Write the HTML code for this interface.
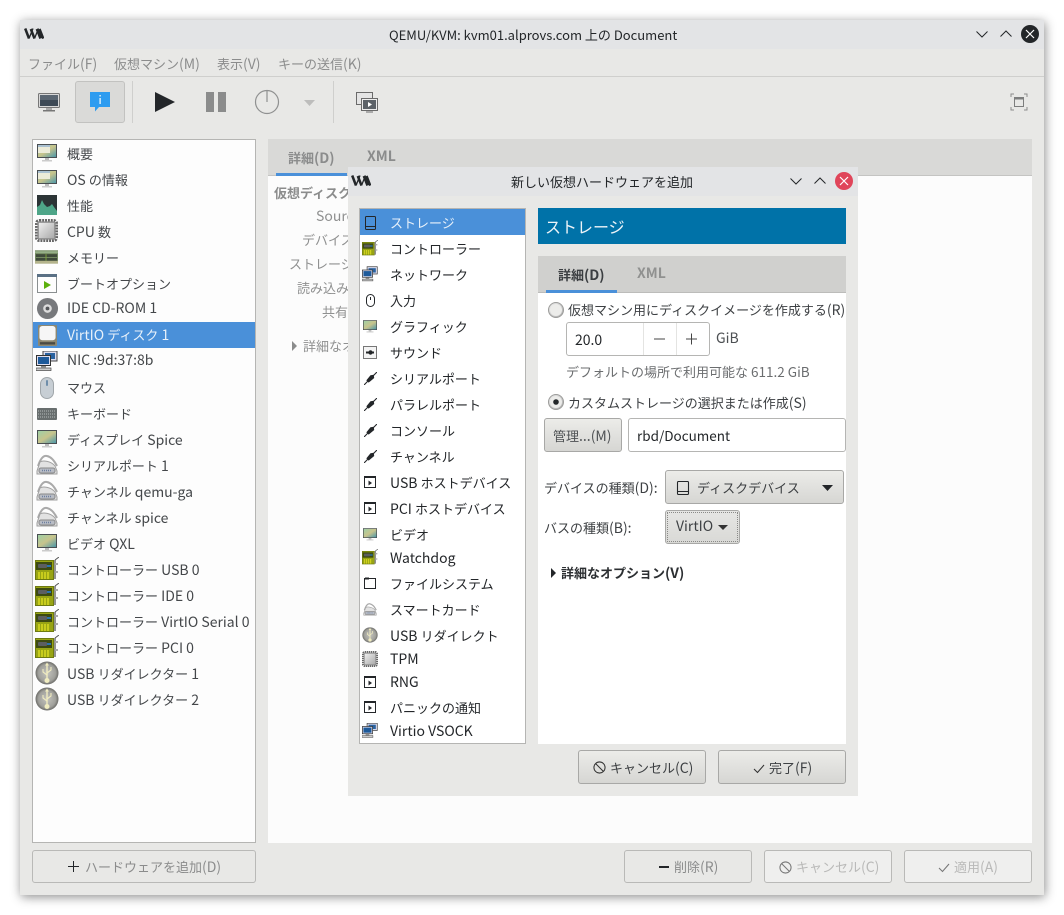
<!DOCTYPE html>
<html lang="ja"><head><meta charset="utf-8"><title>QEMU/KVM</title>
<style>
html,body{margin:0;padding:0;background:#fff;width:1064px;height:915px;overflow:hidden}
body{position:relative;font-family:"Noto Sans CJK JP","Liberation Sans",sans-serif;font-size:14px;color:#232629}
.a{position:absolute;box-sizing:border-box}
.t{position:absolute;white-space:nowrap;line-height:20px;height:20px}
i{font-style:normal;font-size:13px}
svg{position:absolute;overflow:visible}
.m{color:#8b8c8c}
.l{color:#44474a}
.lb{color:#8f9090;text-align:right}
.b{font-weight:700}
.btn{position:absolute;box-sizing:border-box;border:1px solid #b9b9b7;border-radius:3px}
.grad{background:linear-gradient(#ecece9,#d6d6d3);border-color:#a8a8a6}
.d{color:#232629}
</style></head><body>
<svg width="0" height="0" style="position:absolute">
<defs>
<linearGradient id="scr" x1="0" y1="0" x2="1" y2="1"><stop offset="0" stop-color="#9ed0a6"/><stop offset=".5" stop-color="#c8c48c"/><stop offset="1" stop-color="#4d98a8"/></linearGradient>
<linearGradient id="gry" x1="0" y1="0" x2="1" y2="1"><stop offset="0" stop-color="#eee"/><stop offset="1" stop-color="#aaa"/></linearGradient>
<radialGradient id="usbg"><stop offset="0" stop-color="#c4c4be"/><stop offset=".75" stop-color="#a0a09b"/><stop offset="1" stop-color="#6c6c68"/></radialGradient>
<symbol id="logo" viewBox="0 0 20 11"><path d="M1.200 .5L5 10.500M6.800 1l3.700 9.500M12.800 1l3.700 9.500M15.500 1l3.700 9.500" fill="none" stroke="#232629" stroke-width="2.500"/><path d="M5 10.500L9 .5M10.500 10.500L14.500 .5" fill="none" stroke="#232629" stroke-width="1.300"/></symbol>
<symbol id="mon" viewBox="0 0 20 18"><rect x="0" y="0" width="20" height="14" fill="#4a4f52"/><rect x="1" y="1" width="18" height="12" fill="url(#scr)"/><rect x="8" y="14" width="4" height="2" fill="#bbb"/><rect x="5" y="16" width="10" height="1.500" fill="#ccc"/></symbol>
<symbol id="monw" viewBox="0 0 20 18"><rect x="0" y="0" width="20" height="14" fill="#4a4f52"/><rect x="1" y="1" width="18" height="12" fill="url(#scr)"/><rect x="1" y="1" width="12" height="8" fill="#ecebd8"/><rect x="1" y="1" width="12" height="2" fill="#aac0d0"/><rect x="8" y="14" width="4" height="2" fill="#bbb"/><rect x="5" y="16" width="10" height="1.500" fill="#ccc"/></symbol>
<symbol id="perf" viewBox="0 0 20 20"><rect width="20" height="20" fill="#2c3436"/><path d="M0 20V12l3-2 2-5 2 4 3 3 3-1 2-2 2 3 3 4v4z" fill="#4ea588"/></symbol>
<symbol id="cpu" viewBox="0 0 24 24"><rect x="1.500" y="1.500" width="21" height="21" rx="3" fill="none" stroke="#666" stroke-width="3" stroke-dasharray="2 1"/><rect x="2.500" y="2.500" width="19" height="19" rx="2" fill="#8d8d8d"/><rect x="4" y="4" width="16" height="16" fill="url(#gry)"/></symbol>
<symbol id="mem" viewBox="0 0 24 14"><rect width="24" height="13" fill="#748a62"/><rect x="1" y="4" width="22" height="3" fill="#3f4a3a"/><rect x="1" y="8" width="22" height="3" fill="#3f4a3a"/><rect x="0" y="1" width="24" height="2" fill="#96b088"/><rect x="11" y="4" width="1" height="7" fill="#7ca03a"/><rect y="11" width="24" height="3" fill="#b4b48c"/></symbol>
<symbol id="boot" viewBox="0 0 20 19"><rect x=".5" y=".5" width="19" height="18" fill="#fdfdfd" stroke="#8a8f90"/><rect width="20" height="3" fill="#5a7084"/><path d="M7 7l7 4-7 4z" fill="#5cb00c"/></symbol>
<symbol id="cd" viewBox="0 0 24 24"><circle cx="12" cy="12" r="11" fill="#77797c"/><circle cx="12" cy="12" r="4.500" fill="#dcdcdc"/><circle cx="12" cy="12" r="2" fill="#55575a"/></symbol>
<symbol id="disk" viewBox="0 0 20 22"><rect width="20" height="22" rx="1" fill="#8d8872"/><rect x="1.500" y="1" width="17" height="15" rx="3" fill="#f6f6f6"/><rect x="2" y="18" width="16" height="2.500" fill="#4a4a44"/></symbol>
<symbol id="nic" viewBox="0 0 22 20"><rect x="7" y="0" width="14" height="10" fill="#dde" stroke="#444" stroke-width="1"/><rect x="9" y="2" width="10" height="6" fill="#2a62a0"/><rect x=".5" y="4.500" width="14" height="10" fill="#dde" stroke="#333" stroke-width="1"/><rect x="2" y="6" width="11" height="7" fill="#1e5a9a"/><rect x="0" y="17" width="15" height="2.500" fill="#ccc" stroke="#444" stroke-width=".7"/><rect x="5" y="15" width="5" height="2" fill="#888"/></symbol>
<symbol id="mouse" viewBox="0 0 14 22"><rect x=".5" y=".5" width="13" height="21" rx="6.500" fill="#c7ced4" stroke="#a0a6aa"/><rect x="6" y="3" width="2" height="6" rx="1" fill="#6f8eaa"/></symbol>
<symbol id="kbd" viewBox="0 0 20 12"><rect width="20" height="12" rx="1" fill="#686e6e"/><path d="M1 3h18M1 6h18M1 9h18" stroke="#b4baba" stroke-width="1" stroke-dasharray="1 1"/></symbol>
<symbol id="ser" viewBox="0 0 24 24"><path d="M3 13C5 7 8 2 12 3c5 1 8 6 10 10" fill="none" stroke="#aaa" stroke-width="2"/><path d="M5 9C8 7 16 8 20 13l2 5v3H2v-3z" fill="#e2e2e2" stroke="#a0a0a0"/><rect x="4" y="15" width="16" height="5" rx="2" fill="#b8bcc4" stroke="#888"/><path d="M7 17.500h10" stroke="#6d7fa0" stroke-width="1.500" stroke-dasharray="1 1"/></symbol>
<symbol id="ctl" viewBox="0 0 24 24"><rect y="3" width="19" height="20" fill="#6e7a10"/><rect x="1" y="4" width="17" height="18" fill="#98a414"/><rect x="1" y="5" width="16" height="8" fill="#3d4a12"/><rect x="3" y="7" width="9" height="4" rx="1" fill="#5c5e60"/><rect x="12" y="8" width="4" height="2" fill="#2a72b0"/><path d="M4 15v7M7 15v7M10 15v7M13 15v7" stroke="#d8da20" stroke-width="1.500"/><path d="M20 3v19" stroke="#888" stroke-width="1.800" fill="none"/><path d="M20 7h3M20 15h3" stroke="#aaa" stroke-width="2"/><path d="M20 3l4-3" stroke="#555" stroke-width="1"/></symbol>
<symbol id="usb" viewBox="0 0 24 24"><circle cx="12" cy="12" r="11.500" fill="url(#usbg)"/><path d="M12 1.500l2 3h-1.300v13h-1.400v-13H10z" fill="#f0ecc0"/><path d="M12 14l-4-3V8M12 12l4-3V6" stroke="#f0ecc0" stroke-width="1.100" fill="none"/><circle cx="12" cy="19.500" r="2.500" fill="#f0ecc0"/></symbol>
<symbol id="hdd" viewBox="0 0 14 14"><rect x="1.500" y=".5" width="11" height="13" rx="1" fill="none" stroke="#232629" stroke-width="1.100"/><path d="M2 10.500h10" stroke="#232629"/></symbol>
<symbol id="plug" viewBox="0 0 14 14"><path d="M0 14l4-4M14 0l-4 4" stroke="#232629" stroke-width="1.200"/><path d="M2.500 9L7 3.500l3.500-.5.500 3.500L5 11.500z" fill="#232629"/></symbol>
<symbol id="app" viewBox="0 0 12 12"><rect x=".5" y=".5" width="11" height="11" fill="#fff" stroke="#232629"/><rect width="12" height="2" fill="#232629"/><path d="M4.500 4.500l3.500 2.500-3.500 2.500z" fill="#232629"/></symbol>
<symbol id="ban" viewBox="0 0 14 14"><circle cx="7" cy="7" r="6" fill="none" stroke="currentColor" stroke-width="1.100"/><path d="M3 3l8 8" stroke="currentColor" stroke-width="1.100"/></symbol>
<symbol id="chk" viewBox="0 0 12 10"><path d="M1 5l3.500 3.500L11 1" fill="none" stroke="currentColor" stroke-width="1.100"/></symbol>
</defs></svg>

<!-- main window -->
<div class="a" style="left:20px;top:20px;width:1024px;height:875px;background:#e8e8e6;box-shadow:1px 2px 10px rgba(0,0,0,.45)"></div>
<div class="a" style="left:20px;top:20px;width:1024px;height:29px;background:#e3e4e6"></div>
<svg style="left:24px;top:28px" width="20" height="11"><use href="#logo"/></svg>
<div class="t" style="left:389px;top:25px;font-size:13px">QEMU/KVM: kvm01.alprovs.com 上の Document</div>
<svg style="left:976px;top:31px" width="12" height="7"><path d="M.5 .5L6 6l5.500-5.500" fill="none" stroke="#232629" stroke-width="1"/></svg>
<svg style="left:1000px;top:30px" width="12" height="7"><path d="M.5 6.500L6 1l5.500 5.500" fill="none" stroke="#232629" stroke-width="1"/></svg>
<svg style="left:1021px;top:25px" width="18" height="18"><circle cx="9" cy="9" r="9" fill="#232629"/><path d="M5 5l8 8M13 5l-8 8" stroke="#fff" stroke-width="1.200"/></svg>

<div class="t m" style="left:28px;top:54px"><i>ファイル</i>(F)</div>
<div class="t m" style="left:114px;top:54px"><i>仮想マシン</i>(M)</div>
<div class="t m" style="left:217px;top:54px"><i>表示</i>(V)</div>
<div class="t m" style="left:278px;top:54px"><i>キーの送信</i>(K)</div>
<div class="a" style="left:20px;top:76px;width:1024px;height:1px;background:#cfcfcd"></div>

<!-- toolbar -->
<svg style="left:38px;top:93px" width="22" height="19"><rect x=".5" y=".5" width="21" height="14" rx="1" fill="#d8d8d8" stroke="#777"/><rect x="2" y="2" width="18" height="11" fill="#3e4a56"/><rect x="2" y="2" width="18" height="5" fill="#5a6672"/><rect x="8" y="15" width="6" height="2" fill="#aaa"/><rect x="5" y="17" width="12" height="1.500" fill="#777"/></svg>
<div class="a" style="left:75px;top:81px;width:50px;height:42px;background:#dadad8;border:1px solid #c2c2c0;border-radius:3px"></div>
<svg style="left:90px;top:92px" width="20" height="20"><path d="M0 0h20v15H9l-4 4.500V15H0z" fill="#2e9cf0"/><rect x="9.500" y="3" width="1.200" height="1.500" fill="#fff"/><rect x="9.500" y="6" width="1.200" height="6" fill="#fff"/></svg>
<div class="a" style="left:132px;top:81px;width:1px;height:42px;background:#cfcfcd"></div>
<svg style="left:155px;top:92px" width="20" height="20"><path d="M0 0l20 10L0 20z" fill="#232629"/></svg>
<div class="a" style="left:206px;top:92px;width:8px;height:20px;background:#8b8c8c"></div>
<div class="a" style="left:218px;top:92px;width:8px;height:20px;background:#8b8c8c"></div>
<svg style="left:254px;top:89px" width="26" height="26"><circle cx="13" cy="13" r="11.500" fill="none" stroke="#8f9090" stroke-width="1.200"/><path d="M13 1v12" stroke="#8f9090" stroke-width="1.200"/></svg>
<svg style="left:304px;top:100px" width="11" height="6"><path d="M0 0h11L5.500 6z" fill="#bdbdbc"/></svg>
<div class="a" style="left:333px;top:81px;width:1px;height:42px;background:#cfcfcd"></div>
<svg style="left:356px;top:92px" width="22" height="22"><rect x=".5" y=".5" width="16" height="12" fill="#e4e4e4" stroke="#6a6a6a"/><rect x="5.500" y="6.500" width="16" height="12" fill="#eee" stroke="#6a6a6a"/><rect x="7" y="8" width="13" height="9" fill="#5c6268"/><path d="M12 10l4 2.500-4 2.500z" fill="#fff"/><rect x="10" y="19" width="7" height="2" fill="#aaa"/></svg>
<svg style="left:1011px;top:94px" width="16" height="16"><path d="M0 3V0h3M13 0h3v3M16 13v3h-3M3 16H0v-3" fill="none" stroke="#8b8c8c" stroke-width="1"/><rect x="3.500" y="3.500" width="9" height="9" fill="none" stroke="#7d7e7e"/><rect x="3" y="3" width="10" height="2.500" fill="#7d7e7e"/></svg>

<!-- left list -->
<div class="a" style="left:32px;top:139px;width:224px;height:704px;background:#fdfdfd;border:1px solid #b5b5b3"></div>
<div class="a" style="left:33px;top:322px;width:222px;height:26px;background:#4a90d9"></div>
<svg style="left:37px;top:144px" width="20" height="18"><use href="#monw"/></svg><div class="t l" style="left:67px;top:144px"><i>概要</i></div>
<svg style="left:37px;top:170px" width="20" height="18"><use href="#monw"/></svg><div class="t l" style="left:67px;top:170px">OS <i>の情報</i></div>
<svg style="left:37px;top:195px" width="20" height="20"><use href="#perf"/></svg><div class="t l" style="left:67px;top:196px"><i>性能</i></div>
<svg style="left:35px;top:219px" width="23" height="23"><use href="#cpu"/></svg><div class="t l" style="left:67px;top:222px">CPU <i>数</i></div>
<svg style="left:35px;top:250px" width="23" height="14"><use href="#mem"/></svg><div class="t l" style="left:67px;top:248px"><i>メモリー</i></div>
<svg style="left:37px;top:274px" width="20" height="19"><use href="#boot"/></svg><div class="t l" style="left:67px;top:274px"><i>ブートオプション</i></div>
<svg style="left:36px;top:297px" width="23" height="23"><use href="#cd"/></svg><div class="t l" style="left:67px;top:298px">IDE CD-ROM 1</div>
<svg style="left:38px;top:325px" width="19" height="21"><use href="#disk"/></svg><div class="t" style="left:67px;top:325px;color:#e8f1fa">VirtIO <i>ディスク</i> 1</div>
<svg style="left:36px;top:351px" width="22" height="20"><use href="#nic"/></svg><div class="t l" style="left:67px;top:350px">NIC :9d:37:8b</div>
<svg style="left:40px;top:377px" width="14" height="22"><use href="#mouse"/></svg><div class="t l" style="left:67px;top:378px"><i>マウス</i></div>
<svg style="left:37px;top:408px" width="20" height="12"><use href="#kbd"/></svg><div class="t l" style="left:67px;top:404px"><i>キーボード</i></div>
<svg style="left:37px;top:430px" width="20" height="18"><use href="#mon"/></svg><div class="t l" style="left:67px;top:430px"><i>ディスプレイ</i> Spice</div>
<svg style="left:35px;top:453px" width="24" height="24"><use href="#ser"/></svg><div class="t l" style="left:67px;top:456px"><i>シリアルポート</i> 1</div>
<svg style="left:35px;top:479px" width="24" height="24"><use href="#ser"/></svg><div class="t l" style="left:67px;top:482px"><i>チャンネル</i> qemu-ga</div>
<svg style="left:35px;top:505px" width="24" height="24"><use href="#ser"/></svg><div class="t l" style="left:67px;top:508px"><i>チャンネル</i> spice</div>
<svg style="left:37px;top:534px" width="20" height="18"><use href="#mon"/></svg><div class="t l" style="left:67px;top:534px"><i>ビデオ</i> QXL</div>
<svg style="left:35px;top:557px" width="24" height="24"><use href="#ctl"/></svg><div class="t l" style="left:67px;top:560px"><i>コントローラー</i> USB 0</div>
<svg style="left:35px;top:583px" width="24" height="24"><use href="#ctl"/></svg><div class="t l" style="left:67px;top:586px"><i>コントローラー</i> IDE 0</div>
<svg style="left:35px;top:609px" width="24" height="24"><use href="#ctl"/></svg><div class="t l" style="left:67px;top:612px"><i>コントローラー</i> VirtIO Serial 0</div>
<svg style="left:35px;top:635px" width="24" height="24"><use href="#ctl"/></svg><div class="t l" style="left:67px;top:638px"><i>コントローラー</i> PCI 0</div>
<svg style="left:35px;top:661px" width="24" height="24"><use href="#usb"/></svg><div class="t l" style="left:67px;top:664px">USB <i>リダイレクター</i> 1</div>
<svg style="left:35px;top:687px" width="24" height="24"><use href="#usb"/></svg><div class="t l" style="left:67px;top:690px">USB <i>リダイレクター</i> 2</div>

<!-- right pane behind -->
<div class="a" style="left:268px;top:139px;width:764px;height:37px;background:#d9d9d7;border-bottom:1px solid #c4c4c2"></div>
<div class="a" style="left:276px;top:173px;width:71px;height:3px;background:#4a90d9"></div>
<div class="a" style="left:268px;top:176px;width:764px;height:667px;background:#fcfcfc"></div>
<div class="t b m" style="left:288px;top:148px"><i>詳細</i>(D)</div>
<div class="t b m" style="left:367px;top:146px">XML</div>
<div class="t b m" style="left:274px;top:183px"><i>仮想ディスク</i></div>
<div class="t lb" style="left:316px;top:206px">Source</div>
<div class="t lb" style="left:302px;top:230px"><i>デバイス</i></div>
<div class="t lb" style="left:289px;top:254px"><i>ストレージ</i></div>
<div class="t lb" style="left:297px;top:278px"><i>読み込み</i></div>
<div class="t lb" style="left:322px;top:302px"><i>共有</i></div>
<svg style="left:292px;top:341px" width="6" height="10"><path d="M0 0l5 5-5 5z" fill="#8b8c8c"/></svg>
<div class="t lb" style="left:303px;top:336px"><i>詳細なオ</i></div>

<!-- bottom buttons -->
<div class="btn" style="left:32px;top:850px;width:224px;height:33px"></div>
<svg style="left:68px;top:861px" width="11" height="11"><path d="M5.500 0v11M0 5.500h11" stroke="#232629" stroke-width="1"/></svg>
<div class="t" style="left:85px;top:857px;color:#8b8c8c"><i>ハードウェアを追加</i>(D)</div>
<div class="btn" style="left:624px;top:850px;width:128px;height:33px"></div>
<div class="a" style="left:659px;top:866px;width:10px;height:2px;background:#232629"></div>
<div class="t" style="left:674px;top:857px;color:#8b8c8c"><i>削除</i>(R)</div>
<div class="btn" style="left:764px;top:850px;width:128px;height:33px;background:#efefee"></div>
<svg style="left:779px;top:861px;color:#777" width="13" height="13"><use href="#ban"/></svg>
<div class="t" style="left:796px;top:857px;color:#b9b9b8"><i>キャンセル</i>(C)</div>
<div class="btn" style="left:904px;top:850px;width:128px;height:33px;background:#efefee"></div>
<svg style="left:938px;top:863px;color:#777" width="12" height="10"><use href="#chk"/></svg>
<div class="t" style="left:954px;top:857px;color:#b9b9b8"><i>適用</i>(A)</div>

<!-- dialog -->
<div class="a" style="left:348px;top:167px;width:510px;height:629px;background:#e8e8e6"></div>
<div class="a" style="left:348px;top:167px;width:510px;height:29px;background:#e3e4e6"></div>
<svg style="left:351px;top:175px" width="20" height="11"><use href="#logo"/></svg>
<div class="t" style="left:511px;top:172px"><i>新しい仮想ハードウェアを追加</i></div>
<svg style="left:790px;top:178px" width="12" height="7"><path d="M.5 .5L6 6l5.500-5.500" fill="none" stroke="#232629" stroke-width="1"/></svg>
<svg style="left:814px;top:177px" width="12" height="7"><path d="M.5 6.500L6 1l5.500 5.500" fill="none" stroke="#232629" stroke-width="1"/></svg>
<svg style="left:835px;top:172px" width="18" height="18"><circle cx="9" cy="9" r="9" fill="#e0455a"/><path d="M5 5l8 8M13 5l-8 8" stroke="#fff" stroke-width="1.200"/></svg>

<div class="a" style="left:359px;top:208px;width:167px;height:536px;background:#fff;border:1px solid #b5b5b3"></div>
<div class="a" style="left:360px;top:209px;width:165px;height:26px;background:#4a90d9"></div>
<svg style="left:364px;top:216px" width="14" height="14"><rect x="1.500" y=".5" width="10" height="13" rx="1" fill="none" stroke="#232629"/><path d="M2 10.500h9" stroke="#232629"/></svg><div class="t" style="left:390px;top:213px;color:#e8f1fa"><i>ストレージ</i></div>
<svg style="left:362px;top:240px" width="16" height="16"><use href="#ctl"/></svg><div class="t d" style="left:390px;top:239px"><i>コントローラー</i></div>
<svg style="left:362px;top:266px" width="16" height="16"><use href="#nic"/></svg><div class="t d" style="left:390px;top:265px"><i>ネットワーク</i></div>
<svg style="left:366px;top:294px" width="9" height="14"><rect x=".5" y=".5" width="8" height="12" rx="4" fill="none" stroke="#232629"/><path d="M4.500 3v3" stroke="#232629"/></svg><div class="t d" style="left:390px;top:291px"><i>入力</i></div>
<svg style="left:363px;top:320px" width="14" height="13"><use href="#mon"/></svg><div class="t d" style="left:390px;top:317px"><i>グラフィック</i></div>
<svg style="left:363px;top:346px" width="14" height="13"><rect x=".5" y=".5" width="13" height="12" fill="#f4f4f4" stroke="#777"/><path d="M3 6.500h3M8 6.500h3" stroke="#232629" stroke-width="2"/><circle cx="7.500" cy="6.500" r="2.200" fill="#232629"/></svg><div class="t d" style="left:390px;top:343px"><i>サウンド</i></div>
<svg style="left:364px;top:372px" width="13" height="13"><use href="#plug"/></svg><div class="t d" style="left:390px;top:369px"><i>シリアルポート</i></div>
<svg style="left:364px;top:398px" width="13" height="13"><use href="#plug"/></svg><div class="t d" style="left:390px;top:395px"><i>パラレルポート</i></div>
<svg style="left:364px;top:424px" width="13" height="13"><use href="#plug"/></svg><div class="t d" style="left:390px;top:421px"><i>コンソール</i></div>
<svg style="left:364px;top:450px" width="13" height="13"><use href="#plug"/></svg><div class="t d" style="left:390px;top:447px"><i>チャンネル</i></div>
<svg style="left:364px;top:476px" width="12" height="12"><use href="#app"/></svg><div class="t d" style="left:390px;top:473px">USB <i>ホストデバイス</i></div>
<svg style="left:364px;top:502px" width="12" height="12"><use href="#app"/></svg><div class="t d" style="left:390px;top:499px">PCI <i>ホストデバイス</i></div>
<svg style="left:363px;top:528px" width="14" height="13"><use href="#mon"/></svg><div class="t d" style="left:390px;top:525px"><i>ビデオ</i></div>
<svg style="left:362px;top:549px" width="16" height="16"><use href="#ctl"/></svg><div class="t d" style="left:390px;top:548px">Watchdog</div>
<svg style="left:364px;top:577px" width="12" height="12"><rect x=".5" y="1.500" width="11" height="10" fill="#fff" stroke="#232629"/><path d="M1 .5h4v2H1z" fill="#232629"/></svg><div class="t d" style="left:390px;top:574px"><i>ファイルシステム</i></div>
<svg style="left:362px;top:602px" width="16" height="15"><use href="#ser"/></svg><div class="t d" style="left:390px;top:600px"><i>スマートカード</i></div>
<svg style="left:362px;top:627px" width="16" height="16"><use href="#usb"/></svg><div class="t d" style="left:390px;top:626px">USB <i>リダイレクト</i></div>
<svg style="left:362px;top:651px" width="16" height="16"><use href="#cpu"/></svg><div class="t d" style="left:390px;top:649px">TPM</div>
<svg style="left:364px;top:676px" width="12" height="12"><use href="#app"/></svg><div class="t d" style="left:390px;top:672px">RNG</div>
<svg style="left:364px;top:701px" width="12" height="12"><use href="#app"/></svg><div class="t d" style="left:390px;top:698px"><i>パニックの通知</i></div>
<svg style="left:362px;top:723px" width="16" height="15"><use href="#nic"/></svg><div class="t d" style="left:390px;top:721px">Virtio VSOCK</div>

<div class="a" style="left:538px;top:208px;width:308px;height:36px;background:#0072a8"></div>
<div class="t" style="left:545px;top:216px;color:#eef4f8;font-size:16px">ストレージ</div>
<div class="a" style="left:538px;top:256px;width:308px;height:37px;background:#d0d0ce;border-bottom:1px solid #bcbcba"></div>
<div class="a" style="left:546px;top:290px;width:71px;height:3px;background:#4a90d9"></div>
<div class="a" style="left:538px;top:293px;width:308px;height:451px;background:#fff"></div>
<div class="t b" style="left:558px;top:265px;color:#3b3e41"><i>詳細</i>(D)</div>
<div class="t b" style="left:637px;top:263px;color:#909190">XML</div>

<svg style="left:548px;top:302px" width="16" height="16"><circle cx="8" cy="8" r="7.500" fill="url(#gry)" stroke="#9c9c9a"/><circle cx="8" cy="8" r="6" fill="#ececea"/></svg>
<div class="t" style="left:568px;top:300px;color:#3d4043"><i>仮想マシン用にディスクイメージを作成する</i>(R)</div>
<div class="a" style="left:566px;top:322px;width:144px;height:34px;background:#fff;border:1px solid #b5b5b3;border-radius:3px"></div>
<div class="a" style="left:643px;top:323px;width:1px;height:32px;background:#e4e4e2"></div>
<div class="a" style="left:676px;top:323px;width:1px;height:32px;background:#e4e4e2"></div>
<div class="t d" style="left:575px;top:330px">20.0</div>
<svg style="left:654px;top:333px" width="12" height="12"><path d="M0 6h11" stroke="#444" stroke-width="1"/></svg>
<svg style="left:686px;top:333px" width="12" height="12"><path d="M0 6h11M5.500 .5v11" stroke="#444" stroke-width="1"/></svg>
<div class="t" style="left:716px;top:328px;color:#4d5053">GiB</div>
<div class="t" style="left:566px;top:361px;color:#6b6d6f;font-size:13.500px"><i>デフォルトの場所で利用可能な</i> 611.2 GiB</div>
<svg style="left:548px;top:394px" width="16" height="16"><circle cx="8" cy="8" r="7.500" fill="url(#gry)" stroke="#9c9c9a"/><circle cx="8" cy="8" r="6" fill="#ececea"/><circle cx="8" cy="8" r="2.800" fill="#232629"/></svg>
<div class="t" style="left:568px;top:393px;color:#3d4043"><i>カスタムストレージの選択または作成</i>(S)</div>
<div class="btn grad" style="left:544px;top:418px;width:78px;height:34px"></div>
<div class="t" style="left:553px;top:426px;color:#4d5053"><i>管理</i>...(M)</div>
<div class="a" style="left:628px;top:418px;width:218px;height:34px;background:#fff;border:1px solid #b5b5b3;border-radius:3px"></div>
<div class="t d" style="left:637px;top:425px;font-size:13.500px">rbd/Document</div>
<div class="t" style="left:544px;top:478px;color:#3d4043"><i>デバイスの種類</i>(D):</div>
<div class="btn grad" style="left:665px;top:470px;width:179px;height:34px"></div>
<svg style="left:676px;top:481px" width="14" height="14"><use href="#hdd"/></svg>
<div class="t" style="left:697px;top:478px;color:#3d4043"><i>ディスクデバイス</i></div>
<svg style="left:822px;top:485px" width="11" height="6"><path d="M0 0h11L5.500 6z" fill="#232629"/></svg>
<div class="t" style="left:544px;top:518px;color:#3d4043"><i>バスの種類</i>(B):</div>
<div class="btn grad" style="left:665px;top:510px;width:75px;height:34px;background:linear-gradient(#e6e6e4,#d9d9d6)"></div>
<div class="a" style="left:667px;top:512px;width:71px;height:30px;border:1px dotted #8a8a88"></div>
<div class="t" style="left:676px;top:516px;color:#3d4043">VirtIO</div>
<svg style="left:718px;top:525px" width="10" height="5"><path d="M0 0h10L5 5z" fill="#333"/></svg>
<svg style="left:551px;top:568px" width="5" height="10"><path d="M0 0l5 5-5 5z" fill="#232629"/></svg>
<div class="t b" style="left:561px;top:563px;color:#2c2f32"><i>詳細なオプション</i>(V)</div>

<div class="btn grad" style="left:578px;top:750px;width:128px;height:34px"></div>
<svg style="left:593px;top:761px;color:#333" width="13" height="13"><use href="#ban"/></svg>
<div class="t" style="left:610px;top:758px;color:#3d4043"><i>キャンセル</i>(C)</div>
<div class="btn grad" style="left:718px;top:750px;width:128px;height:34px"></div>
<svg style="left:753px;top:764px;color:#333" width="12" height="10"><use href="#chk"/></svg>
<div class="t" style="left:769px;top:758px;color:#3d4043"><i>完了</i>(F)</div>
</body></html>
